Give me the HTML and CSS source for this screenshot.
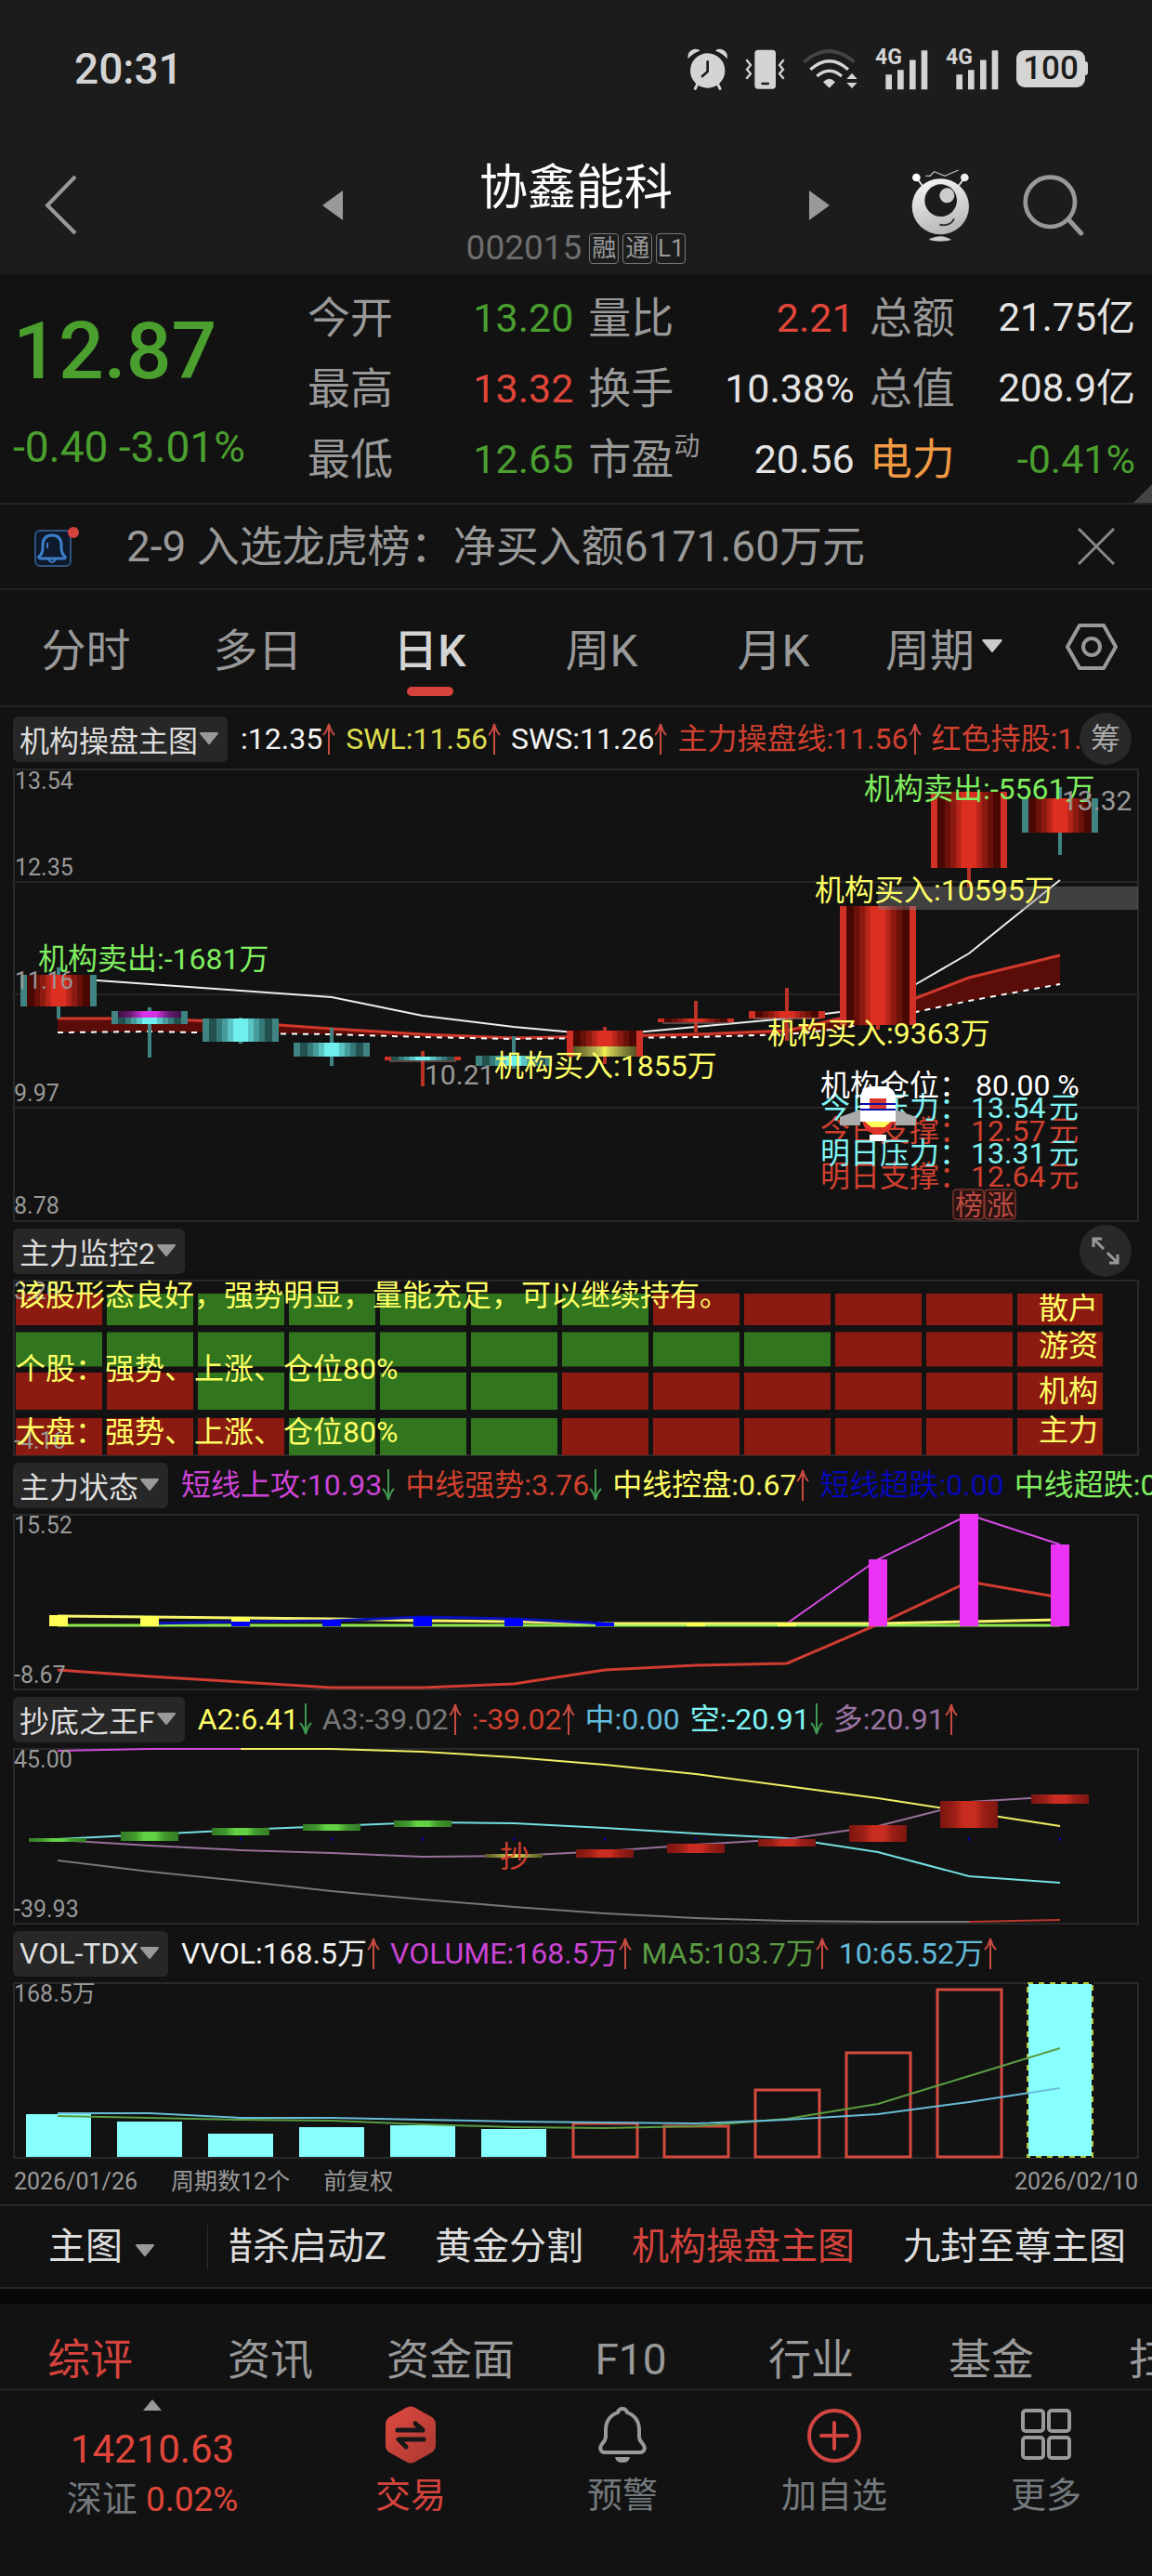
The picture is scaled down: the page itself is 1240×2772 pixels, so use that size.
FILE: index.html
```html
<!DOCTYPE html>
<html lang="zh-CN">
<head>
<meta charset="utf-8">
<meta name="viewport" content="width=device-width, initial-scale=1">
<title>协鑫能科 002015</title>
<link rel="stylesheet" href="styles.css">
</head>
<body>
<svg class="defs" width="0" height="0" aria-hidden="true">
  <defs>
    <linearGradient id="red"><stop offset="0" stop-color="#4a0803"/><stop offset=".12" stop-color="#4a0803"/><stop offset=".12" stop-color="#6a110a"/><stop offset=".21" stop-color="#6a110a"/><stop offset=".21" stop-color="#8c1a11"/><stop offset=".29" stop-color="#8c1a11"/><stop offset=".29" stop-color="#aa2118"/><stop offset=".38" stop-color="#c0281c"/><stop offset=".38" stop-color="#dc2f21"/><stop offset=".62" stop-color="#dc2f21"/><stop offset=".62" stop-color="#c0281c"/><stop offset=".71" stop-color="#aa2118"/><stop offset=".71" stop-color="#8c1a11"/><stop offset=".79" stop-color="#8c1a11"/><stop offset=".79" stop-color="#6a110a"/><stop offset=".88" stop-color="#6a110a"/><stop offset=".88" stop-color="#4a0803"/><stop offset="1" stop-color="#4a0803"/></linearGradient>
    <linearGradient id="cyan"><stop offset="0" stop-color="#235150"/><stop offset=".12" stop-color="#235150"/><stop offset=".12" stop-color="#357978"/><stop offset=".21" stop-color="#357978"/><stop offset=".21" stop-color="#469c9b"/><stop offset=".3" stop-color="#469c9b"/><stop offset=".3" stop-color="#59c4c3"/><stop offset=".38" stop-color="#59c4c3"/><stop offset=".38" stop-color="#6ff0ee"/><stop offset=".62" stop-color="#6ff0ee"/><stop offset=".62" stop-color="#59c4c3"/><stop offset=".7" stop-color="#59c4c3"/><stop offset=".7" stop-color="#469c9b"/><stop offset=".79" stop-color="#469c9b"/><stop offset=".79" stop-color="#357978"/><stop offset=".88" stop-color="#357978"/><stop offset=".88" stop-color="#235150"/><stop offset="1" stop-color="#235150"/></linearGradient>
    <linearGradient id="purple"><stop offset="0" stop-color="#3f1145"/><stop offset=".2" stop-color="#6a1c73"/><stop offset=".4" stop-color="#d634e6"/><stop offset=".6" stop-color="#d634e6"/><stop offset=".8" stop-color="#6a1c73"/><stop offset="1" stop-color="#3f1145"/></linearGradient>
    <linearGradient id="yellow"><stop offset="0" stop-color="#555523"/><stop offset=".2" stop-color="#85853a"/><stop offset=".45" stop-color="#d2d255"/><stop offset=".5" stop-color="#f2f24a"/><stop offset=".55" stop-color="#d2d255"/><stop offset=".8" stop-color="#85853a"/><stop offset="1" stop-color="#555523"/></linearGradient>
    <linearGradient id="green"><stop offset="0" stop-color="#347a25"/><stop offset=".25" stop-color="#419a2e"/><stop offset=".4" stop-color="#62d244"/><stop offset=".6" stop-color="#62d244"/><stop offset=".75" stop-color="#419a2e"/><stop offset="1" stop-color="#347a25"/></linearGradient>
    <linearGradient id="brick"><stop offset="0" stop-color="#7c1610"/><stop offset=".25" stop-color="#9c1f17"/><stop offset=".4" stop-color="#c92c20"/><stop offset=".6" stop-color="#c92c20"/><stop offset=".75" stop-color="#9c1f17"/><stop offset="1" stop-color="#7c1610"/></linearGradient>
    <linearGradient id="silver" x1=".3" y1="0" x2=".6" y2="1"><stop offset="0" stop-color="#f4f4f4"/><stop offset="1" stop-color="#b4b4b4"/></linearGradient>
    <linearGradient id="badge" x1="0" y1="0" x2="1" y2="1"><stop offset="0" stop-color="#e04a40"/><stop offset="1" stop-color="#a83831"/></linearGradient>
  </defs>
  <symbol id="up" viewBox="0 0 14 34"><path d="M7 34V2M1 13Q5 9 7 1Q9 9 13 13" fill="none" stroke="#c94a40" stroke-width="2"/></symbol>
  <symbol id="down" viewBox="0 0 14 34"><path d="M7 0V32M1 21Q5 25 7 33Q9 25 13 21" fill="none" stroke="#3f9a4f" stroke-width="2"/></symbol>
  <symbol id="caret" viewBox="0 0 24 14"><path d="M3 1H21L12 12Z" fill="currentColor" stroke="currentColor" stroke-width="2" stroke-linejoin="round"/></symbol>
  <symbol id="signal" viewBox="672 64 171 132"><path d="M706 147h20v48h-20zM744 132h20v63h-20zM783 100h20v95h-20zM821 69h20v126h-20z" fill="#d4d4d4"/></symbol>
</svg>

<header class="top">
  <div class="status">
    <time>20:31</time>
    <div class="status-icons">
      <svg width="43" height="45" viewBox="66 64 129 135" aria-label="闹钟"><g fill="#d4d4d4"><circle cx="131" cy="136" r="56"/><path d="M68 98Q64 70 90 66Q102 65 106 72Q82 80 68 98ZM194 98Q198 70 172 66Q160 65 156 72Q180 80 194 98Z"/></g><path d="M98 180l-7 14M164 180l7 14" stroke="#d4d4d4" stroke-width="9" stroke-linecap="round"/><path d="M131 107V139L114 154" stroke="#1c1c1c" stroke-width="8" fill="none" stroke-linecap="round"/></svg>
      <svg width="43" height="45" viewBox="258 64 129 135" aria-label="振动"><rect x="289" y="69" width="68" height="126" rx="11" fill="#d4d4d4"/><path d="M313 178h20" stroke="#1c1c1c" stroke-width="7" stroke-linecap="round"/><path d="M262 101l14 17-12 14 12 14-14 16M383 101l-14 17 12 14-12 14 14 16" fill="none" stroke="#d4d4d4" stroke-width="7"/></svg>
      <svg width="59" height="45" viewBox="447 64 177 135" aria-label="无线网络"><path d="M451 108Q533 38 613 108" fill="none" stroke="#444" stroke-width="11"/><g fill="none" stroke="#d4d4d4" stroke-width="10"><path d="M472 132Q533 78 594 132M493 154Q533 120 573 154"/></g><path d="M513 173Q533 152 552 173L533 192ZM606 144l17 19h-34zM606 193l17-18h-34z" fill="#d4d4d4"/></svg>
      <span class="net"><svg width="57" height="45" aria-hidden="true"><use href="#signal"/></svg><b>4G</b></span>
      <span class="net"><svg width="57" height="45" aria-hidden="true"><use href="#signal"/></svg><b>4G</b></span>
      <span class="battery">100</span>
    </div>
  </div>
  <nav class="titlebar">
    <button class="icon back" aria-label="返回"><svg width="36" height="66" viewBox="0 0 36 66"><path d="M33 2L3 33L33 63" fill="none" stroke="#999" stroke-width="4"/></svg></button>
    <div class="stock">
      <button class="icon" aria-label="上一只"><svg width="22" height="34" viewBox="0 0 22 34"><path d="M22 1V33L0 17Z" fill="#999"/></svg></button>
      <div class="name">
        <h1>协鑫能科</h1>
        <p>002015<span class="tags"><i>融</i><i>通</i><i>L1</i></span></p>
      </div>
      <button class="icon" aria-label="下一只"><svg width="22" height="34" viewBox="0 0 22 34"><path d="M0 1V33L22 17Z" fill="#999"/></svg></button>
    </div>
    <div class="actions">
      <button class="icon" aria-label="助手"><svg width="63" height="78" viewBox="786 442 189 234"><path d="M803 470L822 496M958 470L938 496" stroke="#ddd" stroke-width="6"/><circle cx="802" cy="469" r="13" fill="#fff"/><circle cx="958" cy="469" r="13" fill="#eee"/><path d="M832 464h14l14-14 34 14 44-19" stroke="#bbb" stroke-width="4" fill="none"/><ellipse cx="880" cy="563" rx="92" ry="90" fill="url(#silver)"/><circle cx="881" cy="543" r="52" fill="#1c1c1c"/><circle cx="901" cy="527" r="24" fill="#ccc"/><path d="M877 621Q912 628 924 602" fill="none" stroke="#333" stroke-width="6"/><path d="M842 670Q880 648 916 670Q880 680 842 670Z" fill="#ccc"/></svg></button>
      <button class="icon" aria-label="搜索"><svg width="66" height="66" viewBox="1145 461 198 198"><circle cx="1233" cy="549" r="80" fill="none" stroke="#999" stroke-width="14"/><path d="M1292 605L1333 650" stroke="#999" stroke-width="15" stroke-linecap="round"/></svg></button>
    </div>
  </nav>
</header>

<main>
  <section class="quote">
    <div class="price"><strong>12.87</strong><p>-0.40 -3.01%</p></div>
    <dl class="stats">
      <div><dt>今开</dt><dd class="g">13.20</dd></div>
      <div><dt>量比</dt><dd class="r">2.21</dd></div>
      <div><dt>总额</dt><dd class="s">21.75亿</dd></div>
      <div><dt>最高</dt><dd class="r">13.32</dd></div>
      <div><dt>换手</dt><dd>10.38%</dd></div>
      <div><dt>总值</dt><dd class="s">208.9亿</dd></div>
      <div><dt>最低</dt><dd class="g">12.65</dd></div>
      <div><dt>市盈<sup>动</sup></dt><dd>20.56</dd></div>
      <div><dt class="o">电力</dt><dd class="g">-0.41%</dd></div>
    </dl>
    <span class="fold"></span>
  </section>

  <section class="notice">
    <svg width="50" height="46" viewBox="0 0 50 46" aria-hidden="true"><rect x="2" y="6" width="38" height="38" rx="5" fill="#0e1a2c" stroke="#2f5482" stroke-width="2"/><path d="M6 34Q10 31 10 24V22Q10 11 20 11T30 22V24Q30 31 34 34Q35 36 32 36H9Q5 36 6 34Z" fill="none" stroke="#3f7fc9" stroke-width="3"/><path d="M16 37q4 6 8 0M15 19v6" fill="none" stroke="#3f7fc9" stroke-width="2"/><circle cx="43" cy="8" r="6" fill="#d5433d"/></svg>
    <p>2-9 入选龙虎榜：净买入额6171.60万元</p>
    <button class="icon" aria-label="关闭"><svg width="40" height="40" viewBox="0 0 40 40"><path d="M1 1L39 39M39 1L1 39" stroke="#888" stroke-width="3"/></svg></button>
  </section>

  <nav class="periods">
    <button>分时</button><button>多日</button><button class="on">日K</button><button>周K</button><button>月K</button>
    <button class="more">周期<svg width="26" height="15"><use href="#caret"/></svg></button>
    <button aria-label="设置"><svg width="56" height="50" viewBox="0 0 56 50"><path d="M15 2H41L54 25L41 48H15L2 25Z" fill="none" stroke="#999" stroke-width="4" stroke-linejoin="round"/><circle cx="28" cy="25" r="9" fill="none" stroke="#999" stroke-width="4"/></svg></button>
  </nav>

  <section class="panel first">
    <div class="bar">
      <button class="chip">机构操盘主图<svg width="24" height="14"><use href="#caret"/></svg></button>
      <div class="vals">
        <span class="w">:12.35<svg><use href="#up"/></svg></span>
        <span class="y2">SWL:11.56<svg><use href="#up"/></svg></span>
        <span class="w">SWS:11.26<svg><use href="#up"/></svg></span>
        <span class="r2">主力操盘线:11.56<svg><use href="#up"/></svg></span>
        <span class="r2">红色持股:1.00</span>
      </div>
      <button class="round">筹</button>
    </div>
    <svg class="chart" viewBox="14 0 1212 488">
      <path class="grid" d="M14 122H1226M14 243H1226M14 365H1226"/>
      <rect class="frame" x="15" y="1" width="1210" height="486"/>
      <path d="M62 269L161 269 259 273 357 280 455 286 553 290 651 288 749 286 847 282 904 269 945 257 986 247 1043 225 1141 201V232L1043 250 986 262 945 271 904 280 847 286 749 289 651 290 553 291 455 289 357 286 259 285 161 283 62 284Z" fill="#5a0d08"/>
      <path d="M62 225L161 232 259 239 357 246 455 266 553 278 651 287 749 278 847 269 904 262 945 255 986 232 1043 199 1141 120" fill="none" stroke="#eee" stroke-width="2"/>
      <path d="M62 269L161 269 259 273 357 280 455 286 553 290 651 288 749 286 847 282 904 269 945 257 986 247 1043 225 1141 201" fill="none" stroke="#d0382c" stroke-width="3"/>
      <path d="M62 284L161 283 259 285 357 286 455 289 553 291 651 290 749 289 847 286 904 280 945 271 986 262 1043 250 1141 232" fill="none" stroke="#fff" stroke-width="2" stroke-dasharray="6 6"/>
      <g fill="#3f8482"><path d="M61 214h4v55h-4zM159 257h4v54h-4zM257 268h4v28h-4zM355 279h4v41h-4zM551 288h4v35h-4zM1139 20h4v73h-4z"/><path d="M22 222h82v34H22zM120 261h82v14h-82zM218 269h82v25h-82zM316 295h82v15h-82zM512 309h82v11h-82zM1100 32h82v37h-82z"/></g>
      <g fill="#b83227"><path d="M453 304h4v38h-4zM649 278h4v40h-4zM747 250h4v34h-4zM845 236h4v57h-4zM943 270h4v11h-4zM1041 100h4v28h-4z"/></g>
      <g fill="#d03026"><path d="M414 310h82v4h-82zM610 282h82v28h-82zM708 269h82v4h-82zM806 261h82v8h-82zM904 148h82v128h-82zM1002 25h82v82h-82z"/></g>
      <g fill="url(#red)"><rect x="29" y="222" width="68" height="34"/><rect x="617" y="282" width="68" height="17"/><rect x="715" y="269" width="68" height="4"/><rect x="813" y="261" width="68" height="7"/><rect x="911" y="148" width="68" height="128"/><rect x="1009" y="25" width="68" height="82"/><rect x="1107" y="32" width="68" height="37"/></g>
      <g fill="url(#cyan)"><rect x="127" y="268" width="68" height="7"/><rect x="225" y="269" width="68" height="25"/><rect x="323" y="295" width="68" height="15"/><rect x="421" y="310" width="68" height="4"/><rect x="519" y="309" width="68" height="11"/></g>
      <rect x="127" y="261" width="68" height="7" fill="url(#purple)"/><rect x="617" y="299" width="68" height="11" fill="url(#yellow)"/>
      <path d="M419 315h72M713 274h72M811 269h72" stroke="#9b7772"/>
      <rect x="945" y="127" width="280" height="25" fill="#808080" opacity=".42"/>
      <g class="axis"><text x="16" y="22">13.54</text><text x="16" y="115">12.35</text><text x="16" y="237">11.16</text><text x="15" y="358">9.97</text><text x="15" y="479">8.78</text></g>
      <g class="mark"><text x="457" y="340">10.21</text></g>
      <g class="label lime"><text x="41" y="216">机构卖出:-1681万</text><text x="930" y="33">机构卖出:-5561万</text></g>
      <g class="label yel"><text x="877" y="142">机构买入:10595万</text><text x="826" y="296">机构买入:9363万</text><text x="532" y="331">机构买入:1855万</text></g>
      <g class="mark"><text x="1143" y="45">13.32</text></g>
      <g class="label red"><text x="883" y="401">今日支撑：</text><text x="1045" y="401">12.57</text><text x="1129" y="401">元</text><text x="883" y="450">明日支撑：</text><text x="1045" y="450">12.64</text><text x="1129" y="450">元</text></g>
      <g class="label aqua"><text x="883" y="376">今日压力：</text><text x="1045" y="376">13.54</text><text x="1129" y="376">元</text><text x="883" y="425">明日压力：</text><text x="1045" y="425">13.31</text><text x="1129" y="425">元</text></g>
      <g class="label whi"><text x="883" y="352">机构仓位：</text><text x="1050" y="352">80.00 %</text></g>
      <g><path d="M904 384V375L926 367V384ZM986 384V375L964 367V384Z" fill="#aaa"/><path d="M926 380V352Q928 344 936 342H954Q962 344 964 352V380Z" fill="#fff"/><path d="M936 355h18v11h-18z" fill="#d8392f"/><path d="M926 361h38M926 367h38" stroke="#0b0ba8" stroke-width="2"/><path d="M928 380h34l-4 9-13 7-13-7z" fill="#e0342a"/><path d="M931 380h28l-7 6h-14z" fill="#ff5"/><path d="M936 394h18v7h-18z" fill="#fff"/></g>
      <g fill="#2a1210" stroke="#a5423a" stroke-width="1"><rect x="1026" y="453" width="33" height="32" rx="3"/><rect x="1060" y="453" width="33" height="32" rx="3"/></g>
      <g class="seal"><text x="1028" y="480">榜</text><text x="1062" y="480">涨</text></g>
    </svg>
  </section>

  <section class="panel">
    <div class="bar">
      <button class="chip">主力监控2<svg width="24" height="14"><use href="#caret"/></svg></button>
      <div class="vals"></div>
      <button class="round" aria-label="全屏"><svg width="30" height="30" viewBox="0 0 30 30"><path d="M13 13L2 2M2 11V2H11M17 17L28 28M28 19V28H19" fill="none" stroke="#999" stroke-width="3"/></svg></button>
    </div>
    <svg class="chart" viewBox="14 0 1212 190">
      <rect class="frame" x="15" y="1" width="1210" height="188"/>
      <g fill="none" stroke-dasharray="93 5">
        <g stroke="#8b1a10"><path stroke-width="34" d="M17 32h93M703 32h484"/><path stroke-width="37" d="M899 75h288"/><path stroke-width="40" d="M17 120h192M605 120h582"/><path stroke-width="40" d="M17 169h289M605 169h582"/></g>
        <g stroke="#31751e"><path stroke-width="34" d="M115 32h583"/><path stroke-width="37" d="M17 75h877"/><path stroke-width="40" d="M213 120h387"/><path stroke-width="40" d="M311 169h289"/></g>
      </g>
      <g class="axis"><text x="15" y="21">3.20</text><text x="15" y="182">-4.16</text></g>
      <g class="label yel"><text x="17" y="28">该股形态良好，强势明显，量能充足，可以继续持有。</text><text x="17" y="107">个股：强势、上涨、仓位80%</text><text x="17" y="175">大盘：强势、上涨、仓位80%</text><text x="1118" y="42">散户</text><text x="1118" y="82">游资</text><text x="1118" y="131">机构</text><text x="1118" y="173">主力</text></g>
    </svg>
  </section>

  <section class="panel">
    <div class="bar">
      <button class="chip">主力状态<svg width="24" height="14"><use href="#caret"/></svg></button>
      <div class="vals">
        <span class="m">短线上攻:10.93<svg><use href="#down"/></svg></span>
        <span class="r2">中线强势:3.76<svg><use href="#down"/></svg></span>
        <span class="y">中线控盘:0.67<svg><use href="#up"/></svg></span>
        <span class="b">短线超跌:0.00</span>
        <span class="l">中线超跌:0.00</span>
      </div>
    </div>
    <svg class="chart" viewBox="14 0 1212 190">
      <rect class="frame" x="15" y="1" width="1210" height="188"/>
      <path d="M62 120H1141" stroke="#8ce94f" stroke-width="3"/>
      <path d="M62 110L161 111 259 112 357 113 455 115 553 116 651 118H945L1043 116 1141 114" fill="none" stroke="#f6f36e" stroke-width="3"/>
      <path d="M161 118L259 116 357 115 455 111 553 113 651 118" fill="none" stroke="#0a10b8" stroke-width="3"/>
      <path d="M62 168L161 175 259 181 357 187H455L553 183 651 168 749 163 847 161 945 119 1043 73 1141 90" fill="none" stroke="#d03c31" stroke-width="3"/>
      <path d="M847 118L945 49 1043 1 1141 33" fill="none" stroke="#d94be6" stroke-width="2"/>
      <path d="M53 109h20v12h-20zM151 110h20v11h-20zM249 111h20v5h-20zM739 117h20v4h-20zM837 117h20v4h-20z" fill="#ff5"/>
      <path d="M249 116h20v5h-20zM347 114h20v7h-20zM445 111h20v10h-20zM543 113h20v8h-20zM641 117h20v4h-20z" fill="#00f"/>
      <path d="M935 49h20v72h-20zM1033 0h20v121h-20zM1131 33h20v88h-20z" fill="#ec33f5"/>
      <g class="axis"><text x="15" y="21">15.52</text><text x="15" y="182">-8.67</text></g>
    </svg>
  </section>

  <section class="panel">
    <div class="bar">
      <button class="chip">抄底之王F<svg width="24" height="14"><use href="#caret"/></svg></button>
      <div class="vals">
        <span class="y">A2:6.41<svg><use href="#down"/></svg></span>
        <span class="gr">A3:-39.02<svg><use href="#up"/></svg></span>
        <span class="r2">:-39.02<svg><use href="#up"/></svg></span>
        <span class="c2">中:0.00</span>
        <span class="c">空:-20.91<svg><use href="#down"/></svg></span>
        <span class="v">多:20.91<svg><use href="#up"/></svg></span>
      </div>
    </div>
    <svg class="chart" viewBox="14 0 1212 190">
      <rect class="frame" x="15" y="1" width="1210" height="188"/>
      <g fill="none" stroke-width="2">
        <path d="M62 3L161 1H259" stroke="#d04bd8"/>
        <path d="M259 1H357L455 4 553 10 651 18 749 28 847 41 945 54 1043 69 1141 84" stroke="#f2ee66"/>
        <path d="M62 98L161 93 259 88 357 84 455 80 553 81 651 86 749 92 847 97 945 112 1043 138 1141 145" stroke="#74dfe0"/>
        <path d="M62 99L161 105 259 110 357 113 455 117 553 116 651 111 749 104 847 98 945 84 1012 67 1043 58 1141 52" stroke="#96709a"/>
        <path d="M62 121L161 133 259 143 357 154 455 163 553 171 651 178 749 183 847 186 945 187H1043" stroke="#777"/>
        <path d="M1043 187L1141 185" stroke="#b8382e"/>
        <path d="M258 98h2m96 0h2m96 0h2m96 0h2m96 0h2m96 0h2m292 0h2m96 0h2" stroke="#0000b0" stroke-width="3"/>
      </g>
      <g fill="url(#green)"><rect x="31" y="97" width="62" height="4"/><rect x="130" y="90" width="62" height="10"/><rect x="228" y="86" width="62" height="8"/><rect x="326" y="82" width="62" height="7"/><rect x="424" y="78" width="62" height="7"/></g>
      <rect x="522" y="114" width="62" height="4" fill="url(#yellow)"/>
      <g fill="url(#brick)"><rect x="620" y="109" width="62" height="9"/><rect x="718" y="103" width="62" height="10"/><rect x="816" y="98" width="62" height="8"/><rect x="914" y="83" width="62" height="18"/><rect x="1012" y="57" width="62" height="29"/><rect x="1110" y="50" width="62" height="10"/></g>
      <g class="label red"><text x="538" y="128">抄</text></g>
      <g class="axis"><text x="15" y="21">45.00</text><text x="15" y="182">-39.93</text></g>
    </svg>
  </section>

  <section class="panel">
    <div class="bar">
      <button class="chip">VOL-TDX<svg width="24" height="14"><use href="#caret"/></svg></button>
      <div class="vals">
        <span class="w">VVOL:168.5万<svg><use href="#up"/></svg></span>
        <span class="m">VOLUME:168.5万<svg><use href="#up"/></svg></span>
        <span class="ma">MA5:103.7万<svg><use href="#up"/></svg></span>
        <span class="c2">10:65.52万<svg><use href="#up"/></svg></span>
      </div>
    </div>
    <svg class="chart" viewBox="14 0 1212 190">
      <rect class="frame" x="15" y="1" width="1210" height="188"/>
      <path d="M28 142h70v46h-70zM126 150h70v38h-70zM224 163h70v25h-70zM322 156h70v32h-70zM420 154h70v34h-70zM518 158h70v30h-70z" fill="#8ff"/>
      <path d="M617 152h69v36h-69zM715 155h69v33h-69zM813 116h69v72h-69zM911 76h69v112h-69zM1009 8h69v180h-69z" fill="none" stroke="#d64a3e" stroke-width="3"/>
      <rect x="1106" y="1" width="70" height="187" fill="#8ff" stroke="#121212" stroke-width="2"/>
      <rect x="1106" y="1" width="70" height="187" fill="none" stroke="#b5c840" stroke-width="2" stroke-dasharray="6 6"/>
      <g fill="none" stroke-width="2"><path d="M62 144L161 146 259 148 357 149 455 153 553 156 651 157 749 155 847 147 945 131 1043 101 1141 71" stroke="#5b9c42"/><path d="M62 141H161L259 146H357L455 148 553 150 651 151 749 152 847 148 945 142 1043 129 1141 114" stroke="#68bcd8"/></g>
      <g class="axis"><text x="15" y="21">168.5万</text></g>
    </svg>
  </section>

  <div class="dates"><time>2026/01/26</time><span>周期数12个</span><span>前复权</span><time>2026/02/10</time></div>

  <nav class="schemes">
    <button class="pick">主图<svg width="24" height="14"><use href="#caret"/></svg></button>
    <div class="scroller"><button>猎杀启动Z</button><button>黄金分割</button><button class="on">机构操盘主图</button><button>九封至尊主图</button></div>
  </nav>

  <nav class="sections">
    <a href="#review" class="on">综评</a><a href="#news">资讯</a><a href="#funds">资金面</a><a href="#f10">F10</a><a href="#industry">行业</a><a href="#fund">基金</a><a href="#scan">扫雷</a>
  </nav>
</main>

<footer class="dock">
  <button class="index">
    <svg width="22" height="14" viewBox="0 0 22 14"><path d="M11 1L21 13H1Z" fill="#999"/></svg>
    <strong>14210.63</strong><span>深证 <em>0.02%</em></span>
  </button>
  <button class="trade"><svg width="62" height="62" viewBox="0 0 62 62"><path d="M26 2Q31 -1 36 2L54 12Q58 15 58 20V42Q58 47 54 50L36 60Q31 63 26 60L8 50Q4 47 4 42V20Q4 15 8 12Z" fill="url(#badge)"/><path d="M17 26H44L36 19M45 36H18L26 44" fill="none" stroke="#171717" stroke-width="5" stroke-linecap="round" stroke-linejoin="round"/></svg>交易</button>
  <button><svg width="62" height="62" viewBox="0 0 62 62"><path d="M31 3Q35 3 36 7Q49 12 49 26V33Q49 37 53 41Q56 45 54 48Q53 50 49 50H13Q9 50 8 48Q6 45 9 41Q13 37 13 33V26Q13 12 26 7Q27 3 31 3Z" fill="none" stroke="#999" stroke-width="4"/><path d="M23 55H39Q38 61 31 61T23 55Z" fill="#999"/></svg>预警</button>
  <button><svg width="62" height="62" viewBox="0 0 62 62"><circle cx="31" cy="32" r="27" fill="none" stroke="#d0453f" stroke-width="4"/><path d="M31 18V46M17 32H45" stroke="#d0453f" stroke-width="4" stroke-linecap="round"/></svg>加自选</button>
  <button><svg width="62" height="62" viewBox="0 0 62 62"><g fill="none" stroke="#999" stroke-width="4"><rect x="6" y="5" width="22" height="22" rx="3"/><rect x="34" y="5" width="22" height="22" rx="3"/><rect x="6" y="34" width="22" height="22" rx="3"/><rect x="34" y="34" width="22" height="22" rx="3"/></g></svg>更多</button>
</footer>
</body>
</html>
```
FILE: styles.css
```css
* { box-sizing: border-box; }

body {
  margin: 0;
  background: #121212;
  color: #ddd;
  font-family: Roboto, "Noto Sans CJK SC", sans-serif;
  font-size: 32px;
  overflow-x: hidden;
}

h1, p, dl, dd { margin: 0; }
button { margin: 0; padding: 0; border: 0; background: none; color: inherit; font: inherit; }
svg { display: block; flex: none; }
i, em { font-style: normal; }
a { color: inherit; text-decoration: none; }
.defs { position: absolute; }
.icon { display: flex; }

/* status bar and title */
.top { background: #1c1c1c; }
.status { display: flex; justify-content: space-between; align-items: center; height: 150px; padding: 0 68px 2px 80px; }
.status time { font-size: 46px; font-weight: 500; color: #d4d4d4; }
.status-icons { display: flex; align-items: center; gap: 19px; }
.net { position: relative; }
.net b { position: absolute; left: 0; top: -2px; font-size: 23px; line-height: 24px; font-weight: 700; color: #d4d4d4; }
.battery { position: relative; width: 74px; height: 40px; margin-right: 4px; border-radius: 9px; background: #d4d4d4; color: #1c1c1c; font-size: 35px; line-height: 40px; font-weight: 500; text-align: center; }
.battery::after { content: ""; position: absolute; right: -3px; top: 12px; width: 4px; height: 15px; border-radius: 0 3px 3px 0; background: #d4d4d4; }

.titlebar { display: grid; grid-template-columns: 28fr 44fr 28fr; align-items: center; height: 145px; padding-bottom: 14px; }
.back { padding-left: 48px; }
.stock { display: flex; align-items: center; justify-content: space-between; }
.name { padding-top: 22px; text-align: center; }
.name h1 { color: #fff; font-size: 52px; line-height: 62px; font-weight: 400; }
.name p { display: flex; align-items: center; justify-content: center; margin-top: 8px; color: #6e6e6e; font-size: 37px; line-height: 50px; }
.tags { display: flex; gap: 4px; margin-left: 8px; }
.tags i { width: 32px; height: 33px; border: 1px solid #777; border-radius: 4px; color: #999; font-size: 26px; line-height: 31px; text-align: center; }
.actions { display: flex; align-items: center; justify-content: flex-end; gap: 57px; padding-right: 73px; }

/* quote */
.quote { position: relative; display: grid; grid-template-columns: 331px 1fr; height: 248px; border-bottom: 2px solid #262626; }
.price { color: #4a9f2f; }
.price strong { display: block; padding: 33px 0 0 14px; font-size: 86px; line-height: 100px; font-weight: 500; }
.price p { padding: 27px 0 0 14px; font-size: 46px; line-height: 52px; white-space: nowrap; }
.stats { display: grid; grid-template-columns: repeat(3, 1fr); grid-auto-rows: 76px; column-gap: 16px; padding: 9px 18px 0 0; }
.stats div { display: flex; justify-content: space-between; align-items: center; }
.stats dt { color: #999; font-size: 46px; line-height: 76px; white-space: nowrap; }
.stats sup { font-size: 28px; line-height: 28px; vertical-align: 20px; }
.stats dd { font-size: 43px; line-height: 76px; color: #e4e4e4; }
.stats .s { font-size: 42px; }
.stats .g { color: #4a9f2f; }
.stats .r { color: #e0463a; }
.stats .o { color: #f09a44; }
.fold { position: absolute; right: 0; bottom: 0; width: 20px; height: 20px; background: #444; clip-path: polygon(100% 0, 100% 100%, 0 100%); }

.notice { display: flex; align-items: center; height: 92px; padding: 0 40px 0 36px; border-bottom: 2px solid #212121; color: #999; }
.notice p { flex: 1; padding-left: 50px; font-size: 46px; line-height: 60px; white-space: nowrap; }

/* period tabs */
.periods { display: grid; grid-template-columns: repeat(5, 185fr) 184fr 131fr; height: 126px; border-bottom: 2px solid #212121; color: #999; }
.periods button { position: relative; display: flex; align-items: center; justify-content: center; gap: 6px; padding-bottom: 3px; font-size: 48px; }
.periods .on { color: #d4d4d4; font-weight: 500; }
.periods .on::after { content: ""; position: absolute; left: 50%; bottom: 10px; width: 50px; height: 10px; margin-left: -25px; border-radius: 5px; background: #d5433d; }
.periods .more svg { color: #ccc; }

/* indicator panels */
.bar { display: flex; align-items: center; height: 62px; padding-left: 14px; }
.first .bar { height: 66px; padding-top: 2px; }
.chip { display: flex; align-items: center; height: 49px; padding: 0 8px 0 7px; border-radius: 6px; background: #272727; color: #ddd; font-size: 32px; white-space: nowrap; }
.chip svg { color: #999; }
.vals { display: flex; flex: 1; gap: 11px; min-width: 0; height: 49px; padding-left: 14px; overflow: hidden; font-size: 32px; line-height: 48px; white-space: nowrap; }
.vals span { display: flex; align-items: center; }
.vals svg { width: 14px; height: 34px; }
.round { display: flex; flex: none; align-items: center; justify-content: center; width: 56px; height: 56px; margin-right: 22px; border-radius: 50%; background: #292929; color: #aaa; font-size: 32px; line-height: 56px; }
.w { color: #f4f4f4; }
.y { color: #ffff66; }
.y2 { color: #dcdc50; }
.r2 { color: #d0402f; }
.m { color: #cc44d6; }
.b { color: #0808b4; }
.l { color: #80ee60; }
.gr { color: #777; }
.c { color: #80f4f4; }
.c2 { color: #62bcdc; }
.v { color: #9c74a2; }
.ma { color: #5b9c42; }

.chart { width: calc(100% - 28px); height: auto; margin: 0 14px; }
.frame { fill: none; stroke: #292929; stroke-width: 2; }
.grid { stroke: #252525; stroke-width: 2; }
.axis { fill: #999; font-size: 25px; }
.mark { fill: #999; font-size: 30px; }
.label { font-size: 32px; }
.seal { fill: #b94b43; font-size: 30px; }
.lime { fill: #80ee60; }
.yel { fill: #ffff66; }
.red { fill: #d0402f; }
.aqua { fill: #80f4f4; }
.whi { fill: #fff; }

.dates { display: flex; gap: 36px; height: 49px; padding: 0 15px; color: #999; font-size: 25px; line-height: 50px; }
.dates time:last-child { margin-left: auto; }

/* chart schemes */
.schemes { display: flex; align-items: center; height: 91px; border-top: 2px solid #262626; border-bottom: 2px solid #262626; font-size: 40px; line-height: 60px; }
.pick { display: flex; align-items: center; gap: 12px; width: 224px; height: 48px; padding-left: 52px; border-right: 1px solid #2c2c2c; }
.pick svg { margin-top: 8px; color: #999; }
.scroller { display: flex; flex: 1; justify-content: flex-end; gap: 52px; min-width: 0; margin-left: 24px; padding-right: 28px; overflow: hidden; white-space: nowrap; }
.scroller button { flex: none; }
.schemes .on { color: #d5433d; }

.sections { display: grid; grid-auto-flow: column; grid-auto-columns: 194px; height: 110px; padding-top: 16px; border-top: 16px solid #070707; border-bottom: 3px solid #212121; overflow: hidden; color: #999; font-size: 46px; line-height: 88px; text-align: center; }
.sections .on { color: #d5433d; }

/* bottom dock */
.dock { display: grid; grid-template-columns: 328fr repeat(4, 228fr); padding-bottom: 64px; color: #73797d; font-size: 38px; line-height: 50px; }
.dock button { display: flex; flex-direction: column; align-items: center; padding-top: 16px; gap: 9px; height: 137px; }
.dock .trade { color: #d5433d; }
.dock .index { padding-top: 8px; gap: 0; }
.index strong { margin-top: 13px; color: #e0463a; font-size: 42px; line-height: 56px; font-weight: 400; }
.index em { color: #e0463a; font-size: 37px; }
```
